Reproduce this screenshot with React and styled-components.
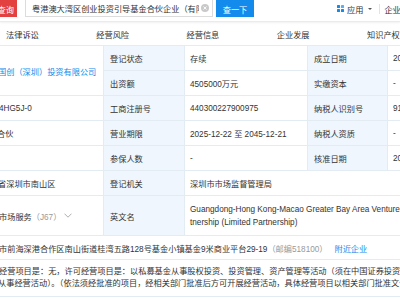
import React from 'react';
import styled, { createGlobalStyle } from 'styled-components';

const Global = createGlobalStyle`
  html, body { margin: 0; padding: 0; background: #fff; overflow: hidden; }
  body {
    font-family: "Liberation Sans", "Noto Sans CJK SC", sans-serif;
    font-size: 8.2px;
    color: #333;
  }
`;

const Page = styled.div`
  width: 400px;
  height: 300px;
  overflow: hidden;
  display: flex;
  flex-direction: column;
  background: #fff;
`;

const TopBar = styled.header`
  flex: none;
  height: 21px;
  display: flex;
  align-items: flex-start;
  border-bottom: 1px solid #ebebeb;
  box-shadow: 0 1px 2px rgba(0, 0, 0, 0.06);
  position: relative;
  z-index: 1;
  white-space: nowrap;
`;

const RedButton = styled.div`
  flex: none;
  width: 17px;
  height: 17px;
  background: #e2413f;
  color: #fff;
  display: flex;
  align-items: center;
  justify-content: flex-end;
  padding-right: 3px;
  box-sizing: border-box;
  overflow: hidden;
`;

const SearchBox = styled.div`
  flex: none;
  margin-left: 8px;
  width: 188px;
  height: 17px;
  box-sizing: border-box;
  border: 1px solid #dcdcdc;
  border-top: none;
  display: flex;
  align-items: center;
  padding-left: 6px;
  padding-right: 3px;
`;

const SearchText = styled.span`
  flex: 1;
  min-width: 0;
  overflow: hidden;
  color: #333;
`;

const ClearIcon = styled.span`
  flex: none;
  margin-left: 2px;
  width: 8px;
  height: 8px;
  border-radius: 50%;
  background: #c9c9c9;
  display: flex;
  align-items: center;
  justify-content: center;
`;

const BlueButton = styled.div`
  flex: none;
  margin-left: 3px;
  width: 38px;
  height: 17px;
  background: #128bed;
  color: #fff;
  display: flex;
  align-items: center;
  justify-content: center;
`;

const AppMenu = styled.div`
  flex: none;
  margin-left: 83px;
  height: 17px;
  display: flex;
  align-items: center;
  gap: 2px;
`;

const GridIcon = styled.span`
  width: 7px;
  height: 7px;
  display: grid;
  grid-template-columns: 3px 3px;
  grid-template-rows: 3px 3px;
  gap: 1px;
  margin-right: 1px;
  & > i {
    display: block;
    background: #128bed;
    border-radius: 0.5px;
  }
  & > i:nth-child(2) { background: #5aaef3; }
`;

const Caret = styled.span`
  margin-left: 3px;
  width: 0;
  height: 0;
  border-left: 2px solid transparent;
  border-right: 2px solid transparent;
  border-top: 2.5px solid #555;
`;

const Divider = styled.span`
  flex: none;
  margin: 4px 4px 0 7px;
  width: 1px;
  height: 10px;
  background: #e3e3e3;
`;

const TopLink = styled.span`
  flex: none;
  height: 17px;
  display: flex;
  align-items: center;
`;

const Tabs = styled.nav`
  flex: none;
  height: 23px;
  display: flex;
  align-items: center;
  white-space: nowrap;
`;

const Tab = styled.span`
  flex: none;
  width: 90.25px;
  padding-left: 6px;
  box-sizing: border-box;
  color: #333;
`;

const Table = styled.div`
  flex: none;
  display: grid;
  grid-template-columns: 104px 81px 123px 80px 120px;
  grid-template-rows: 25px 25px 25px 25px 25px 25px 40px 24px 37px;
  border-top: 1px solid #e4ecf3;
  white-space: nowrap;
`;

const Cell = styled.div`
  grid-column: ${p => p.$col || 'auto'};
  grid-row: ${p => p.$row || 'auto'};
  border-right: 1px solid #e4ecf3;
  border-bottom: 1px solid #e4ecf3;
  overflow: hidden;
  display: flex;
  flex-direction: ${p => (p.$stack ? 'column' : 'row')};
  justify-content: ${p => (p.$stack ? 'center' : 'flex-start')};
  align-items: ${p => (p.$stack ? 'flex-start' : 'center')};
  padding-left: ${p => (p.$lead ? 0 : 5)}px;
  line-height: ${p => p.$lh || 'normal'};
  background: #fff;
  color: #333;
`;

const Label = styled(Cell)`
  background: #eff6fd;
  padding-left: 6px;
`;

const Lead = styled.span`
  display: block;
  margin-left: ${p => p.$shift}px;
  color: ${p => p.$color || 'inherit'};
`;

const Muted = styled.span`
  color: #999;
  margin-left: ${p => p.$gap || 0}px;
`;

const Link = styled.span`
  color: #128bed;
  margin-left: ${p => p.$gap || 0}px;
`;

const Chevron = styled.svg`
  margin-left: 3px;
  flex: none;
`;

export default function App() {
  return (
    <Page>
      <Global />
      <TopBar>
        <RedButton>查询</RedButton>
        <SearchBox>
          <SearchText>粤港澳大湾区创业投资引导基金合伙企业（有限合伙）</SearchText>
          <ClearIcon>
            <svg width="4" height="4" viewBox="0 0 4 4">
              <path d="M0.5 0.5L3.5 3.5M3.5 0.5L0.5 3.5" stroke="#fff" strokeWidth="0.9" />
            </svg>
          </ClearIcon>
        </SearchBox>
        <BlueButton>查一下</BlueButton>
        <AppMenu>
          <GridIcon><i /><i /><i /><i /></GridIcon>
          <span>应用</span>
          <Caret />
        </AppMenu>
        <Divider />
        <TopLink>企业中心</TopLink>
      </TopBar>

      <Tabs>
        <Tab>法律诉讼</Tab>
        <Tab>经营风险</Tab>
        <Tab>经营信息</Tab>
        <Tab>企业发展</Tab>
        <Tab>知识产权</Tab>
      </Tabs>

      <Table>
        <Cell $lead $col="1" $row="1 / 3"><Lead $shift={-2} $color="#128bed">国创（深圳）投资有限公司</Lead></Cell>
        <Label>登记状态</Label>
        <Cell>存续</Cell>
        <Label>成立日期</Label>
        <Cell>2025-12-22</Cell>

        <Label>出资额</Label>
        <Cell>4505000万元</Cell>
        <Label>实缴资本</Label>
        <Cell>-</Cell>

        <Cell $lead><Lead $shift={-1}>4HG5J-0</Lead></Cell>
        <Label>工商注册号</Label>
        <Cell>440300227900975</Cell>
        <Label>纳税人识别号</Label>
        <Cell>91440300MAK4HG5J0X</Cell>

        <Cell $lead><Lead $shift={-3}>合伙</Lead></Cell>
        <Label>营业期限</Label>
        <Cell>2025-12-22 至 2045-12-21</Cell>
        <Label>纳税人资质</Label>
        <Cell>-</Cell>

        <Cell $lead />
        <Label>参保人数</Label>
        <Cell>-</Cell>
        <Label>核准日期</Label>
        <Cell>2025-12-22</Cell>

        <Cell $lead><Lead $shift={-2}>省深圳市南山区</Lead></Cell>
        <Label>登记机关</Label>
        <Cell $col="3 / 6">深圳市市场监督管理局</Cell>

        <Cell $lead>
          <Lead $shift={-1}>市场服务</Lead>
          <Muted>（J67）</Muted>
          <Chevron width="8" height="5" viewBox="0 0 8 5">
            <path d="M0.5 0.7L4 4.2L7.5 0.7" fill="none" stroke="#999" strokeWidth="0.8" />
          </Chevron>
        </Cell>
        <Label>英文名</Label>
        <Cell $col="3 / 6" $stack $lh="13px">
          <span>Guangdong-Hong Kong-Macao Greater Bay Area Venture Capital Guidance Fund Par</span>
          <span>tnership (Limited Partnership)</span>
        </Cell>

        <Cell $lead $col="1 / -1">
          <Lead $shift={-1}>市前海深港合作区南山街道桂湾五路128号基金小镇基金9米商业平台29-19</Lead>
          <Muted>（邮编518100）</Muted>
          <Link $gap={7}>附近企业</Link>
        </Cell>

        <Cell $lead $col="1 / -1" $stack $lh="12px">
          <Lead $shift={-1}>经营项目是：无，许可经营项目是：以私募基金从事股权投资、投资管理、资产管理等活动（须在中国证券投资基金业协会完成登记备案后方可从事经营活动）</Lead>
          <Lead $shift={-2}>从事经营活动）。（依法须经批准的项目，经相关部门批准后方可开展经营活动，具体经营项目以相关部门批准文件或许可证件为准）</Lead>
        </Cell>
      </Table>
    </Page>
  );
}
